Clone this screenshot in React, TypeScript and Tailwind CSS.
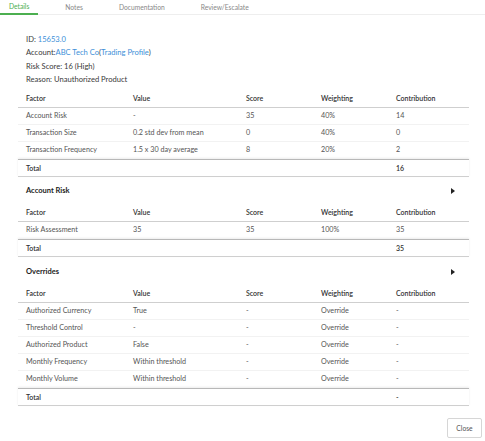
import React from "react";

const cols = "grid grid-cols-[107px_113px_75px_75px_81px]";

type Row = string[];

function Table({ rows, total }: { rows: Row[]; total: string }) {
  return (
    <div className="w-[451px]">
      <div className={`${cols} h-[18px] items-center border-b border-[#cfcfcf] text-[#333] text-[7px] font-semibold`}>
        {["Factor", "Value", "Score", "Weighting", "Contribution"].map((h) => (
          <div key={h} className="pl-2">{h}</div>
        ))}
      </div>
      {rows.map((r, i) => (
        <div
          key={i}
          className={`${cols} h-[17px] items-center text-[#555] text-[7.2px] ${i < rows.length - 1 ? "border-b border-[#f2f2f2]" : ""}`}
        >
          {r.map((c, j) => (
            <div key={j} className="pl-2">{c}</div>
          ))}
        </div>
      ))}
      <div className={`${cols} h-[18px] items-center border-t border-[#b8b8b8] border-b border-b-[#cfcfcf] shadow-[0_-1px_2px_rgba(0,0,0,0.08)] text-[#333] text-[7px] font-semibold`}>
        <div className="pl-2">Total</div>
        <div />
        <div />
        <div />
        <div className="pl-2">{total}</div>
      </div>
    </div>
  );
}

function Heading({ title }: { title: string }) {
  return (
    <div className="w-[451px] h-[27px] flex items-center justify-between pl-2 pr-[14px]">
      <span className="text-[7.5px] font-bold text-[#222]">{title}</span>
      <span className="w-0 h-0 border-y-[3px] border-y-transparent border-l-[4px] border-l-[#222]" />
    </div>
  );
}

export default function App() {
  return (
    <div
      className="w-[485px] h-[441px] bg-white relative overflow-hidden"
      style={{ fontFamily: "Lato, 'Noto Sans', sans-serif" }}
    >
      <div className="flex h-[15px] border-b border-[#eeeeee] gap-[18px] text-[6.7px] text-[#888]">
        <div className="px-[9px] flex items-center text-[#4caf50] border-b-[2px] border-[#4caf50] -mb-px">Details</div>
        <div className="px-[9px] flex items-center">Notes</div>
        <div className="px-[9px] flex items-center">Documentation</div>
        <div className="px-[9px] flex items-center">Review/Escalate</div>
      </div>

      <div className="pl-[18px]">
        <div className="pl-2 pt-[18px] text-[7.6px] text-[#3a3a3a] leading-[13.3px]">
          <div>ID: <span className="text-[#3d8fd8]">15653.0</span></div>
          <div>
            Account:<span className="text-[#3d8fd8]">ABC Tech Co</span>(<span className="text-[#3d8fd8]">Trading Profile</span>)
          </div>
          <div>Risk Score: 16 (High)</div>
          <div>Reason: Unauthorized Product</div>
        </div>

        <div className="mt-[4px]">
          <Table
            rows={[
              ["Account Risk", "-", "35", "40%", "14"],
              ["Transaction Size", "0.2 std dev from mean", "0", "40%", "0"],
              ["Transaction Frequency", "1.5 x 30 day average", "8", "20%", "2"],
            ]}
            total="16"
          />
        </div>

        <Heading title="Account Risk" />
        <Table rows={[["Risk Assessment", "35", "35", "100%", "35"]]} total="35" />

        <div className="h-px" />
        <Heading title="Overrides" />
        <Table
          rows={[
            ["Authorized Currency", "True", "-", "Override", "-"],
            ["Threshold Control", "-", "-", "Override", "-"],
            ["Authorized Product", "False", "-", "Override", "-"],
            ["Monthly Frequency", "Within threshold", "-", "Override", "-"],
            ["Monthly Volume", "Within threshold", "-", "Override", "-"],
          ]}
          total="-"
        />
      </div>

      <div className="flex justify-end pr-[3px] mt-[12px]">
        <button className="w-[35px] h-[20px] border border-[#d6d6d6] rounded-[2px] text-[6.7px] text-[#555] bg-white">
          Close
        </button>
      </div>
    </div>
  );
}
